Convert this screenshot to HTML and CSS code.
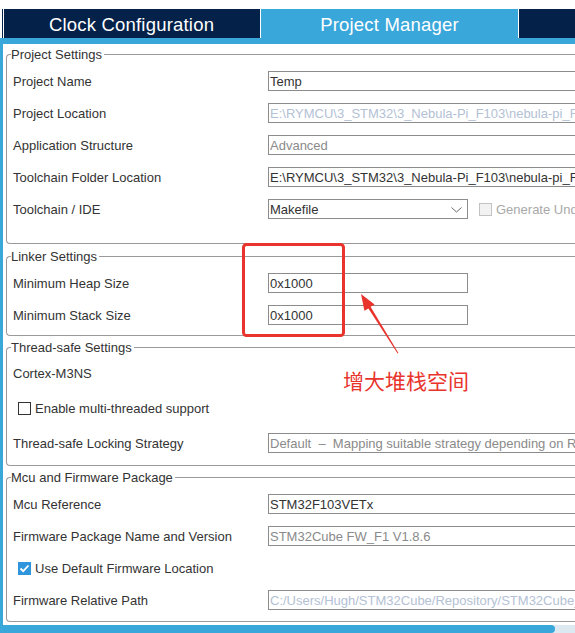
FILE: index.html
```html
<!DOCTYPE html>
<html lang="en">
<head>
<meta charset="utf-8">
<title>Project Manager</title>
<link rel="stylesheet" href="styles.css">
</head>
<body>
<div class="app">
  <div class="tabs">
    <div class="tab tab-dark tab-first">Clock Configuration</div>
    <div class="tab tab-active">Project Manager</div>
    <div class="tab tab-dark tab-rest"></div>
  </div>
  <div class="band"></div>
  <div class="main">
    <div class="strip"></div>
    <div class="panel">
      <fieldset class="group g-project">
        <legend>Project Settings</legend>
        <div class="row"><span class="label">Project Name</span><div class="field wide">Temp</div></div>
        <div class="row"><span class="label">Project Location</span><div class="field wide disabled">E:\RYMCU\3_STM32\3_Nebula-Pi_F103\nebula-pi_F103\Temp</div></div>
        <div class="row"><span class="label">Application Structure</span><div class="field wide muted">Advanced</div></div>
        <div class="row"><span class="label">Toolchain Folder Location</span><div class="field wide">E:\RYMCU\3_STM32\3_Nebula-Pi_F103\nebula-pi_F103\Temp\</div></div>
        <div class="row"><span class="label">Toolchain / IDE</span>
          <div class="inline">
            <div class="field short select">Makefile
              <svg class="chev" width="11" height="6" viewBox="0 0 11 6"><path d="M0.5 0.5 L5.5 5 L10.5 0.5" fill="none" stroke="#6b6b6b" stroke-width="1"/></svg>
            </div>
            <span class="check-disabled"><span class="box box-disabled"></span>Generate Under Root</span>
          </div>
        </div>
      </fieldset>
      <fieldset class="group g-linker">
        <legend>Linker Settings</legend>
        <div class="row"><span class="label">Minimum Heap Size</span><div class="field short">0x1000</div></div>
        <div class="row"><span class="label">Minimum Stack Size</span><div class="field short">0x1000</div></div>
      </fieldset>
      <fieldset class="group g-thread">
        <legend>Thread-safe Settings</legend>
        <div class="row"><span class="label">Cortex-M3NS</span></div>
        <div class="row row-check"><span class="box"></span><span>Enable multi-threaded support</span></div>
        <div class="row"><span class="label">Thread-safe Locking Strategy</span><div class="field wide muted">Default &nbsp;–&nbsp; Mapping suitable strategy depending on RTOS selection</div></div>
      </fieldset>
      <fieldset class="group g-mcu">
        <legend>Mcu and Firmware Package</legend>
        <div class="row"><span class="label">Mcu Reference</span><div class="field wide">STM32F103VETx</div></div>
        <div class="row"><span class="label">Firmware Package Name and Version</span><div class="field wide muted">STM32Cube FW_F1 V1.8.6</div></div>
        <div class="row row-check"><span class="box box-checked"><svg width="13" height="13" viewBox="0 0 13 13"><path d="M2.5 6.5 L5.2 9.2 L10.5 3.5" fill="none" stroke="#fff" stroke-width="1.8"/></svg></span><span>Use Default Firmware Location</span></div>
        <div class="row"><span class="label">Firmware Relative Path</span><div class="field wide disabled">C:/Users/Hugh/STM32Cube/Repository/STM32Cube_FW_F1_V1.8.6</div></div>
      </fieldset>
      <div class="hscroll"><div class="thumb"></div></div>
    </div>
  </div>
  <svg class="annot" width="575" height="633" viewBox="0 0 575 633">
    <rect x="243.5" y="244.5" width="100" height="91" rx="3" fill="none" stroke="#e8342c" stroke-width="3"/>
    <polygon points="361,294 374.6,304.4 370.6,306.8 398.4,353 397.6,353.4 368.4,308.4 364.4,310.8" fill="#e8342c"/>
  </svg>
  <div class="note">增大堆栈空间</div>
</div>
</body>
</html>
```
FILE: styles.css
```css
* { box-sizing: border-box; }
html, body {
  margin: 0;
  padding: 0;
  width: 575px;
  height: 633px;
  overflow: hidden;
  background: #fff;
}
body {
  font-family: "Liberation Sans", Arial, sans-serif;
  font-size: 13px;
  color: #333;
}
.app {
  position: relative;
  width: 575px;
  height: 633px;
  overflow: hidden;
}
.tabs {
  display: flex;
  gap: 1px;
  padding-top: 9px;
  padding-left: 2px;
  height: 38px;
  background: #fff;
}
.tab {
  height: 29px;
  display: flex;
  align-items: center;
  justify-content: center;
  padding-top: 3px;
  color: #fff;
  font-size: 18.5px;
  letter-spacing: 0.2px;
}
.tab-dark { background: #032149; }
.tab-first {
  width: 258px;
  border-left: 1px solid #032149;
  box-shadow: inset 1px 0 0 #fff;
}
.tab-active {
  width: 257px;
  background: #3aa7db;
}
.tab-rest { flex: 1; }
.band {
  height: 6px;
  background: #3aa7db;
}
.main {
  display: flex;
  height: 589px;
}
.strip {
  width: 3px;
  flex: none;
  background: #3aa7db;
}
.panel {
  flex: 1;
  overflow: hidden;
  background: #fff;
}
.group {
  width: 820px;
  margin: 3px 0 0 3px;
  border: 1px solid #9a9a9a;
  border-right: none;
  border-radius: 4px 0 0 4px;
  padding: 0 0 0 6px;
  min-width: 0;
}
.group legend {
  font-size: 13px;
  line-height: 16px;
  padding: 1px 2px 0 0;
  margin-left: -2px;
  color: #333;
}
.g-project { margin-top: 2px; padding-top: 2px; padding-bottom: 18px; }
.g-linker { margin-top: 4px; padding-top: 2px; padding-bottom: 4px; }
.g-thread { margin-top: 3px; padding-top: 1px; padding-bottom: 6px; }
.g-mcu { margin-top: 3px; padding-top: 2px; padding-bottom: 5px; }
.row {
  display: grid;
  grid-template-columns: 255px 1fr;
  align-items: center;
  height: 32px;
}
.g-thread .row-check { height: 38px; }
.row-check {
  display: flex;
  align-items: center;
  padding-left: 5px;
}
.label { white-space: nowrap; }
.field {
  height: 20px;
  border: 1px solid #8c8c8c;
  padding: 1px 1px 0;
  line-height: 18px;
  white-space: nowrap;
  overflow: hidden;
  color: #333;
  background: #fff;
}
.field.wide { width: 480px; }
.field.short { width: 200px; }
.field.muted { color: #8a8a8a; }
.field.disabled { color: #b3c1d4; }
.select {
  position: relative;
}
.chev {
  position: absolute;
  right: 5px;
  top: 7px;
}
.inline {
  display: flex;
  align-items: center;
}
.check-disabled {
  display: flex;
  align-items: center;
  margin-left: 11px;
  color: #a9a9a9;
  white-space: nowrap;
}
.box {
  width: 13px;
  height: 13px;
  flex: none;
  border: 1px solid #333;
  background: #fff;
  margin-right: 4px;
  display: inline-flex;
}
.box-disabled {
  border-color: #c2c2c2;
  background: #f2f2f2;
}
.box-checked {
  border: none;
  background: #2f95dc;
}
.hscroll {
  margin-top: 3px;
  height: 8px;
  background: #dde9f1;
  display: flex;
}
.thumb {
  width: 552px;
  height: 8px;
  background: #3aa7db;
  border-radius: 0 4px 4px 0;
}
.annot {
  position: absolute;
  left: 0;
  top: 0;
  pointer-events: none;
}
.note {
  position: absolute;
  left: 343px;
  top: 368px;
  font-family: "Noto Sans CJK SC", sans-serif;
  font-size: 21px;
  line-height: 24px;
  color: #e8342c;
  white-space: nowrap;
}
```
